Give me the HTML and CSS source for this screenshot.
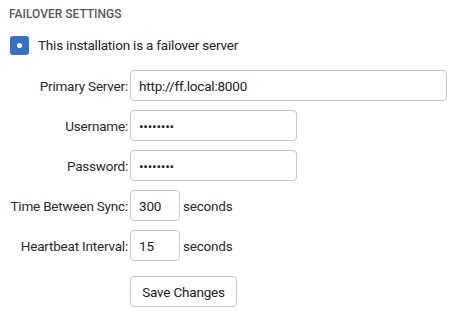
FILE: index.html
```html
<!DOCTYPE html>
<html>
<head>
<meta charset="utf-8">
<link rel="stylesheet" href="styles.css">
</head>
<body>
<div class="panel">
  <h3 class="title">FAILOVER SETTINGS</h3>
  <label class="check-row">
    <span class="check"><span class="dot"></span></span>
    <span class="check-label">This installation is a failover server</span>
  </label>
  <div class="form">
    <label class="lbl">Primary Server:</label>
    <div class="field"><input class="inp inp-wide" type="text" value="http://ff.local:8000"></div>
    <label class="lbl">Username:</label>
    <div class="field"><input class="inp inp-mid" type="password" value="password"></div>
    <label class="lbl">Password:</label>
    <div class="field"><input class="inp inp-mid" type="password" value="password"></div>
    <label class="lbl">Time Between Sync:</label>
    <div class="field"><input class="inp inp-num" type="text" value="300"><span class="unit">seconds</span></div>
    <label class="lbl">Heartbeat Interval:</label>
    <div class="field"><input class="inp inp-num" type="text" value="15"><span class="unit">seconds</span></div>
    <span></span>
    <div class="field actions"><button class="btn" type="button">Save Changes</button></div>
  </div>
</div>
</body>
</html>
```
FILE: styles.css
```css
html, body {
  margin: 0;
  padding: 0;
  background: #ffffff;
}
body {
  font-family: Roboto, "Liberation Sans", sans-serif;
  font-size: 13.5px;
  letter-spacing: -0.2px;
  color: #222222;
}
.panel {
  padding: 6px 9px 0 9px;
}
.title {
  margin: 0;
  font-size: 12px;
  font-weight: 500;
  letter-spacing: 0;
  color: #555a60;
  line-height: 16px;
}
.check-row {
  display: flex;
  align-items: center;
  gap: 9px;
  margin-top: 13px;
  height: 20px;
}
.check {
  width: 19px;
  height: 19px;
  border-radius: 3px;
  background: #3a6dc5;
  display: flex;
  align-items: center;
  justify-content: center;
  margin-left: 1px;
}
.dot {
  width: 5px;
  height: 5px;
  border-radius: 50%;
  background: #ffffff;
}
.check-label {
  color: #222222;
}
.form {
  display: grid;
  grid-template-columns: 119px auto;
  column-gap: 2px;
  row-gap: 9px;
  margin-top: 15px;
  align-items: center;
}
.lbl {
  text-align: right;
  color: #2a2a2a;
  white-space: nowrap;
}
.field {
  display: flex;
  align-items: center;
}
.inp {
  box-sizing: border-box;
  height: 31px;
  border: 1px solid #c9c9c9;
  border-radius: 4px;
  padding: 0 8px;
  font-family: inherit;
  font-size: 13.5px;
  letter-spacing: -0.2px;
  color: #222222;
  background: #ffffff;
  outline: none;
}
.inp-wide { width: 317px; }
.inp-mid { width: 167px; }
.inp-num { width: 50px; }
.unit {
  margin-left: 3px;
  color: #2a2a2a;
}
.actions {
  margin-top: 6px;
}
.btn {
  box-sizing: border-box;
  height: 31px;
  width: 107px;
  border: 1px solid #c9c9c9;
  border-radius: 4px;
  background: #ffffff;
  font-family: inherit;
  font-size: 13.5px;
  letter-spacing: -0.2px;
  color: #222222;
  padding: 0;
}
```
